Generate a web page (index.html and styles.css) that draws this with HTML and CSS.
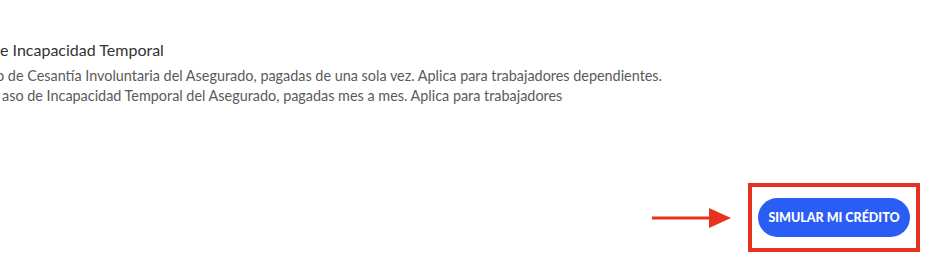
FILE: index.html
```html
<!DOCTYPE html>
<html lang="es">
<head>
  <meta charset="UTF-8" />
  <meta name="viewport" content="width=device-width, initial-scale=1" />
  <title>Simulador de crédito</title>
  <link rel="stylesheet" href="styles.css">
</head>
<body>
  <div class="page">
    <div class="coverage">
      <h3 class="coverage-title">e Incapacidad Temporal</h3>
      <p class="coverage-line first">o de Cesantía Involuntaria del Asegurado, pagadas de una sola vez. Aplica para trabajadores dependientes.</p>
      <p class="coverage-line">aso de Incapacidad Temporal del Asegurado, pagadas mes a mes. Aplica para trabajadores</p>
    </div>

    <div class="actions">
      <svg class="arrow" width="80" height="22" viewBox="0 0 80 22">
        <line x1="0" y1="11" x2="60" y2="11" stroke="#e8321d" stroke-width="3" />
        <polygon points="57,1 79,11 57,21" fill="#e8321d" />
      </svg>
      <div class="highlight">
        <button class="btn-simular">SIMULAR MI CRÉDITO</button>
      </div>
    </div>
  </div>
</body>
</html>
```

FILE: styles.css
```css
* {
  margin: 0; padding: 0; box-sizing: border-box; font-family: Lato, "Open Sans", sans-serif;
}
body {
  background-color: #ffffff;
  width: 930px;
  height: 263px;
  overflow: hidden;
}
.page {
  display: flex;
  flex-direction: column;
  padding-top: 40px;
}
.coverage {
  margin-left: -4px;
}
.coverage-title {
  font-size: 16px;
  font-weight: normal;
  color: #333333;
  line-height: 20px;
  margin-left: 4px;
  margin-bottom: 6px;
}
.coverage-line {
  font-size: 14.4px;
  color: #5a5a5a;
  line-height: 20px;
}
.coverage-line + .coverage-line {
  margin-left: 6px;
}

.actions {
  display: flex;
  justify-content: flex-end;
  align-items: center;
  gap: 16px;
  padding-right: 10px;
  margin-top: 77px;
}
.arrow {
  display: block;
}
.highlight {
  border: 4px solid #e8321d;
  padding: 11px 6px;
}
.btn-simular {
  display: block;
  background-color: #2a5cf6;
  color: white;
  border: none;
  border-radius: 20px;
  width: 152px;
  height: 39px;
  font-size: 12.5px;
  font-weight: 900;
  cursor: pointer;
}
```
